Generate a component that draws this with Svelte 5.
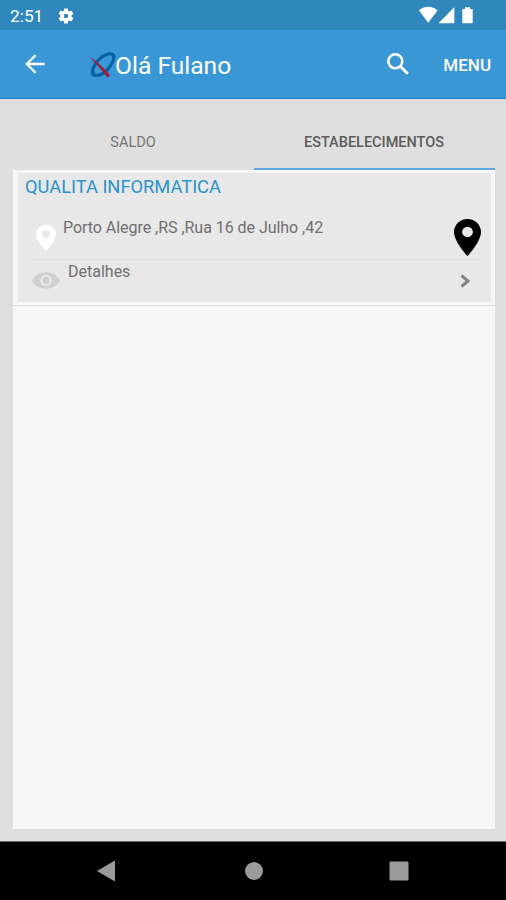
<script>
  const tabs = [
    { label: 'SALDO', active: false },
    { label: 'ESTABELECIMENTOS', active: true }
  ];
  const pin = 'M12 2C8.13 2 5 5.13 5 9c0 5.25 7 13 7 13s7-7.75 7-13c0-3.87-3.13-7-7-7zm0 9.8a2.8 2.8 0 0 1 0-5.600 2.8 2.8 0 0 1 0 5.600z';
</script>

<div class="screen">
  <header>
    <div class="status">
      <span class="time">2:51</span>
      <svg class="gear" width="18" height="18" viewBox="0 0 24 24"><path fill="#fff" d="M19.43 12.98c.04-.32.07-.64.07-.98s-.03-.66-.07-.98l2.11-1.65c.19-.15.24-.42.12-.64l-2-3.46c-.12-.22-.39-.3-.61-.22l-2.49 1c-.52-.4-1.08-.73-1.69-.98l-.38-2.65A.49.49 0 0 0 14 2h-4c-.25 0-.46.18-.49.42l-.38 2.65c-.61.25-1.17.59-1.69.98l-2.49-1c-.23-.09-.49 0-.61.22l-2 3.46c-.13.22-.07.49.12.64l2.11 1.65c-.04.32-.07.65-.07.98s.03.66.07.98l-2.11 1.65c-.19.15-.24.42-.12.64l2 3.46c.12.22.39.3.61.22l2.49-1c.52.4 1.08.73 1.69.98l.38 2.65c.03.24.24.42.49.42h4c.25 0 .46-.18.49-.42l.38-2.65c.61-.25 1.17-.59 1.69-.98l2.49 1c.23.09.49 0 .61-.22l2-3.46c.12-.22.07-.49-.12-.64l-2.11-1.65zM12 15a3 3 0 1 1 0-6 3 3 0 0 1 0 6z"/></svg>
      <svg class="signals" width="56" height="18" viewBox="0 0 56 18" fill="#fff">
        <path d="M0 4.5C5-.4 13.500-.4 18.500 4.5L9.200 16.700z"/>
        <path d="M19.500 17.200 35.300 1.300v15.900z"/>
        <path d="M43.300 3h2.700V1.300h5V3h2.700v14.200H43.300z"/>
      </svg>
    </div>
    <div class="toolbar">
      <svg class="back" width="20" height="20" viewBox="0 0 20 20" fill="none" stroke="#fff" stroke-width="2.3"><path d="M19.5 10H2M10.6 1.2 1.8 10l8.8 8.8"/></svg>
      <svg class="logo" width="26" height="26" viewBox="0 0 26 26">
        <path fill="#08619f" fill-rule="evenodd" d="M17 .7c4-1 7.500 0 8.200 2.500 1 4-2.200 11-7.200 16.200-5.200 5.400-12.500 7-15.600 4.600C-.7 21.500 1 15.500 4.400 10.600 7.700 5.700 12.500 1.800 17 .7zM17.500 3.700C14 4.700 9.900 8 7.300 11.900c-2.700 4-3.700 8.200-2.100 9.500 2 1.600 7-.4 10.700-4.400 4.300-4.600 7-9.900 6.200-12.200-.5-1.400-2.300-1.800-4.600-1.100z"/>
        <path d="M0 5.200C7 9 15 17 20.300 23.500l-2.900 2.100C12 18 6 11.500 0 5.200z" fill="#a31d3c"/>
      </svg>
      <h1>Olá Fulano</h1>
      <svg class="search" width="24" height="24" viewBox="0 0 24 24" fill="none" stroke="#fff"><circle cx="9.3" cy="9.3" r="7" stroke-width="2.5"/><path d="m14.2 14.2 7.600 7.600" stroke-width="3"/></svg>
      <span class="menu">MENU</span>
    </div>
  </header>

  <nav>
    {#each tabs as tab}
      <div class="tab" class:active={tab.active}><span>{tab.label}</span></div>
    {/each}
  </nav>

  <main>
    <section class="card">
      <div class="inner">
        <h2><span>QUALITA INFORMATICA</span></h2>
        <div class="row address">
          <svg class="small-pin" width="20" height="26" viewBox="5 2 14 20" preserveAspectRatio="none"><path d={pin} fill="#fff"/></svg>
          <span>Porto Alegre ,RS ,Rua 16 de Julho ,42</span>
          <svg class="large-pin" width="27" height="37" viewBox="5 2 14 20" preserveAspectRatio="none"><path d={pin} fill="#000"/></svg>
        </div>
        <div class="row details">
          <svg class="eye" width="28" height="17" viewBox="0 0 28 17"><path fill="#d0d0d0" fill-rule="evenodd" d="M0 8.5C5-2.5 23-2.5 28 8.5 23 19.5 5 19.5 0 8.5zM14 2.7a5.8 5.8 0 1 0 0 11.6 5.8 5.8 0 0 0 0-11.6z"/><circle cx="14" cy="8.5" r="3.5" fill="#d0d0d0"/></svg>
          <span>Detalhes</span>
          <svg class="chevron" width="11" height="14" viewBox="0 0 11 14" fill="none" stroke="#858585" stroke-width="3"><path d="m1.5 1.5 6.5 5.5-6.5 5.5"/></svg>
        </div>
      </div>
    </section>
  </main>

  <footer>
    <svg width="18" height="22" viewBox="0 0 18 22"><path d="M18 .5v21L0 11z" fill="#9b9b9b"/></svg>
    <svg class="home" width="18" height="18" viewBox="0 0 18 18"><circle cx="9" cy="9" r="9" fill="#9b9b9b"/></svg>
    <svg width="20" height="20" viewBox="0 0 20 20"><rect x=".5" y=".5" width="19" height="19" rx="1.2" fill="#9b9b9b"/></svg>
  </footer>
</div>

<style>
  :global(body) { margin: 0; }
  .screen {
    width: 506px; height: 900px; overflow: hidden;
    display: flex; flex-direction: column; box-sizing: border-box;
    background: #dfdfdf; font-family: Roboto, "Noto Sans", sans-serif;
  }
  svg { display: block; flex: none; }
  header { flex: none; color: #fff; }
  .status { height: 30px; display: flex; align-items: center; background: #2f87bb; padding: 0 31px 0 10px; }
  .time { font-size: 17.3px; line-height: 20px; padding-top: 1px; width: 47px; }
  .gear { margin-top: 1px; }
  .signals { margin-left: auto; }
  .toolbar { height: 69px; box-sizing: border-box; display: flex; align-items: center; background: #3a97d5; border-bottom: 1px solid #2484c5; padding: 0 15px 0 25px; }
  .back { margin-right: 45px; }
  .logo { margin-top: 1px; }
  h1 { margin: 0 0 0 -1px; padding-top: 3px; font-size: 24.6px; line-height: 30px; font-weight: 400; }
  .search { margin-left: auto; margin-right: 33px; }
  .menu { font-size: 17px; font-weight: 500; line-height: 20px; padding-top: 1px; }
  nav { flex: none; height: 71px; display: flex; padding: 0 11px 0 13px; }
  .tab { flex: 1; display: flex; align-items: center; justify-content: center; box-sizing: border-box; padding: 17px 1px 0 0; border-bottom: 2px solid transparent; color: #757575; font-size: 14.5px; }
  .active { border-color: #5ea9dd; color: #5c5c5c; font-weight: 500; }
  main { flex: none; height: 659px; margin: 0 11px 0 13px; background: #f7f7f7; }
  .card { height: 136px; box-sizing: border-box; padding: 3px 4px 3px 5px; border-bottom: 1px solid #dedede; background: #f6f6f6; }
  .inner { height: 129px; background: #e8e8e8; padding: 0 5px 0 8px; box-sizing: border-box; }
  h2 { margin: 0 0 0 -1px; height: 37px; font-size: 18.3px; font-weight: 400; line-height: 27px; color: #2a94cc; }
  .row { display: flex; color: #707070; font-size: 16px; line-height: 20px; }
  .address { height: 50px; box-sizing: border-box; border-bottom: 1px solid #e1e1e1; }
  .address span { margin: 8px 0 0 7px; letter-spacing: -.04px; }
  .small-pin { margin: 15px 0 0 10px; }
  .large-pin { margin: 9px 5px 0 auto; }
  .details { height: 42px; }
  .details span { margin: 2px 0 0 8px; }
  .eye { margin: 12px 0 0 6px; }
  .chevron { margin: 14px 15px 0 auto; }
  footer { margin-top: auto; height: 59px; box-sizing: border-box; display: flex; align-items: center; justify-content: space-between; padding: 0 97px; background: #000; border-top: 1px solid #6b6b6b; }
  .home { margin-left: 3px; }
</style>
